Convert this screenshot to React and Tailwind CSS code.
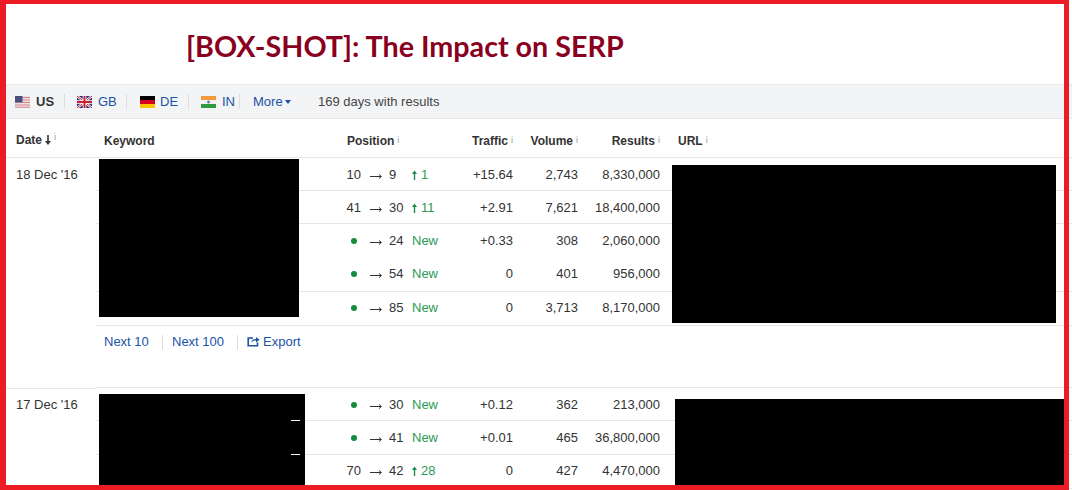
const Info = () => <sup className="inline-block w-[5px] text-right text-[9px] font-normal text-[#999999] relative top-[-2px] leading-none">i</sup>;

const Flag = ({ c }) => {
  if (c === "US") return (
    <svg width="15" height="12" viewBox="0 0 15 12" className="shrink-0">
      <rect width="15" height="12" fill="#e8e4e6" />
      <path d="M0 1.5h15M0 4h15M0 6.5h15M0 9h15M0 11.3h15" stroke="#d9838c" strokeWidth="1.1" />
      <rect width="7.5" height="6.4" fill="#4a4f7e" />
    </svg>
  );
  if (c === "GB") return (
    <svg width="15" height="12" viewBox="0 0 15 12" className="shrink-0">
      <rect width="15" height="12" fill="#2a2f7a" />
      <path d="M0 0L15 12M15 0L0 12" stroke="#fff" strokeWidth="2.4" />
      <path d="M0 0L15 12M15 0L0 12" stroke="#c8202f" strokeWidth="1" />
      <path d="M7.5 0V12M0 6H15" stroke="#fff" strokeWidth="3.6" />
      <path d="M7.5 0V12M0 6H15" stroke="#c8202f" strokeWidth="2" />
    </svg>
  );
  if (c === "DE") return (
    <svg width="15" height="12" viewBox="0 0 15 12" className="shrink-0">
      <rect width="15" height="4" fill="#000" />
      <rect y="4" width="15" height="4" fill="#d8001f" />
      <rect y="8" width="15" height="4" fill="#fcc500" />
    </svg>
  );
  return (
    <svg width="15" height="12" viewBox="0 0 15 12" className="shrink-0">
      <rect width="15" height="4" fill="#f59a3c" />
      <rect y="4" width="15" height="4" fill="#f4f2ee" />
      <rect y="8" width="15" height="4" fill="#2f9a3c" />
      <circle cx="7.5" cy="6" r="1.4" fill="#6b6fa8" />
    </svg>
  );
};

const Sep = () => <span className="block w-px h-[15px] bg-[#dddddd] shrink-0" />;

const Cols = "grid grid-cols-[239px_106px_72px_65px_82px_1fr]";

const Arrow = () => (
  <svg width="12" height="7" viewBox="0 0 12 7" className="shrink-0 block mt-[3px]">
    <path d="M0 3.5H11M9 1.5L11.5 3.5L9 5.5" stroke="#333" strokeWidth="1" fill="none" />
  </svg>
);

const Up = () => (
  <svg width="5" height="10" viewBox="0 0 5 10" className="shrink-0 ml-[1px] mr-[4px]">
    <path d="M2.5 10V2" stroke="#1a8a4a" strokeWidth="1.4" />
    <path d="M0 4L2.5 0.5L5 4Z" fill="#1a8a4a" />
  </svg>
);

const Row = ({ from, to, change, traffic, volume, results, noLine, h = "h-[33px]", shift = "" }) => (
  <div className={`${Cols} ${h} ${shift} items-center text-[13px] text-[#333333] ${noLine ? "" : "border-b border-[#e6e6e6]"}`}>
    <div />
    <div className="flex items-center">
      <span className="w-[26px] text-right shrink-0 flex justify-end">
        {from === null ? <span className="w-[6px] h-[6px] rounded-full bg-[#178a3c] mr-[4px]" /> : from}
      </span>
      <span className="ml-[9px]"><Arrow /></span>
      <span className="w-[29px] pl-[7px] shrink-0">{to}</span>
      {change === "New" ? (
        <span className="ml-[1px] text-[#2a9a55]">New</span>
      ) : (
        <span className="flex items-center text-[#2a9a55]"><Up />{change}</span>
      )}
    </div>
    <div className="text-right">{traffic}</div>
    <div className="text-right">{volume}</div>
    <div className="text-right">{results}</div>
    <div />
  </div>
);

export default function App() {
  return (
    <div className="relative w-[1072px] h-[490px] overflow-hidden bg-white font-['Liberation_Sans',Arial,sans-serif]">
      <div className="h-[85px] pl-[186px] pt-[26px] border-b border-[#e8e8e8]">
        <h1 className="text-[28.7px] leading-[40px] font-bold text-[#8a0020] font-['Lato',sans-serif] whitespace-nowrap">[BOX-SHOT]: The Impact on SERP</h1>
      </div>

      <div className="h-[34px] bg-[#f3f4f6] border-b border-[#e8e8e8] flex items-center pl-[15px] text-[13px] whitespace-nowrap text-[#1a52a8]">
        <Flag c="US" />
        <span className="ml-[6px] w-[19px] font-bold text-[#333333]">US</span>
        <span className="ml-[9px]"><Sep /></span>
        <span className="ml-[12px]"><Flag c="GB" /></span>
        <span className="ml-[6px] w-[20px]">GB</span>
        <span className="ml-[8px]"><Sep /></span>
        <span className="ml-[13px]"><Flag c="DE" /></span>
        <span className="ml-[5px] w-[19px]">DE</span>
        <span className="ml-[9px]"><Sep /></span>
        <span className="ml-[12px]"><Flag c="IN" /></span>
        <span className="ml-[6px] w-[12px]">IN</span>
        <span className="ml-[5px]"><Sep /></span>
        <span className="ml-[13px] w-[29px]">More</span>
        <span className="ml-[3px] border-x-[3px] border-t-[4px] border-x-transparent border-t-[#1a52a8]" />
        <span className="ml-[27px] text-[#444444]">169 days with results</span>
      </div>

      <div className="grid grid-cols-[96px_239px_106px_72px_65px_82px_1fr] h-[39px] items-center pt-[6px] border-b border-[#e6e6e6] text-[12px] font-bold text-[#333333]">
        <div className="pl-[16px] mt-[-3px] flex items-center">
          Date
          <svg width="6" height="10" viewBox="0 0 6 10" className="ml-[3px] shrink-0">
            <path d="M3 0V7" stroke="#333" strokeWidth="1.6" />
            <path d="M0 6H6L3 10Z" fill="#333" />
          </svg>
          <Info />
        </div>
        <div className="pl-[8px]">Keyword</div>
        <div className="pl-[12px]">Position<Info /></div>
        <div className="text-right">Traffic<Info /></div>
        <div className="text-right">Volume<Info /></div>
        <div className="text-right">Results<Info /></div>
        <div className="pl-[18px]">URL<Info /></div>
      </div>

      <div className="relative">
        <div className="absolute left-[16px] top-[7px] text-[13px] text-[#333333]">18 Dec '16</div>
        <div className="ml-[96px]">
          <Row from="10" to="9" change="1" traffic="+15.64" volume="2,743" results="8,330,000" shift="pt-[1px]" />
          <Row from="41" to="30" change="11" traffic="+2.91" volume="7,621" results="18,400,000" shift="pt-[1px]" />
          <Row from={null} to="24" change="New" traffic="+0.33" volume="308" results="2,060,000" noLine h="h-[34px]" />
          <Row from={null} to="54" change="New" traffic="0" volume="401" results="956,000" h="h-[34px]" shift="pb-[2px]" />
          <Row from={null} to="85" change="New" traffic="0" volume="3,713" results="8,170,000" h="h-[34px]" shift="pb-[2px]" />
        </div>
        <div className="absolute left-[99px] top-[1px] w-[200px] h-[158px] bg-black" />
        <div className="absolute left-[672px] top-[7px] w-[384px] h-[158px] bg-black" />
      </div>

      <div className="ml-[96px] h-[62px] border-b border-[#e6e6e6] pl-[8px] pt-[6px] flex items-start text-[13px] whitespace-nowrap text-[#1a52a8]">
        <span className="w-[45px]">Next 10</span>
        <span className="ml-[13px] mt-[3px]"><Sep /></span>
        <span className="ml-[9px] w-[52px]">Next 100</span>
        <span className="ml-[13px] mt-[3px]"><Sep /></span>
        <svg width="13" height="11" viewBox="0 0 13 11" className="ml-[9px] mt-[4px]">
          <path d="M6 2H1.2V9.8H10.5V6.5" fill="none" stroke="#1a52a8" strokeWidth="1.6" />
          <path d="M4 6.5C4.5 4 6.5 3 9 3V1L12.5 3.7L9 6.4V4.6C7 4.6 5.5 5 4 6.5Z" fill="#1a52a8" />
        </svg>
        <span className="ml-[3px]">Export</span>
      </div>

      <div className="relative">
        <div className="absolute left-0 top-0 w-[96px] h-px bg-[#e6e6e6]" />
        <div className="absolute left-[16px] top-[7px] text-[13px] text-[#333333]">17 Dec '16</div>
        <div className="ml-[96px]">
          <Row from={null} to="30" change="New" traffic="+0.12" volume="362" results="213,000" shift="pt-[1px]" />
          <Row from={null} to="41" change="New" traffic="+0.01" volume="465" results="36,800,000" h="h-[34px]" />
          <Row from="70" to="42" change="28" traffic="0" volume="427" results="4,470,000" h="h-[34px]" shift="pb-[2px]" />
        </div>
        <div className="absolute left-[99px] top-[6px] w-[206px] h-[100px] bg-black" />
        <div className="absolute left-[291px] top-[32px] w-[9px] h-px bg-white" />
        <div className="absolute left-[291px] top-[66px] w-[9px] h-px bg-white" />
        <div className="absolute left-[675px] top-[11px] w-[392px] h-[100px] bg-black" />
      </div>

      <div className="absolute left-0 top-0 w-[1069px] h-[490px] border-l-[6px] border-t-[4px] border-r-[5px] border-b-[5px] border-[#ed1c24] pointer-events-none" />
    </div>
  );
}
